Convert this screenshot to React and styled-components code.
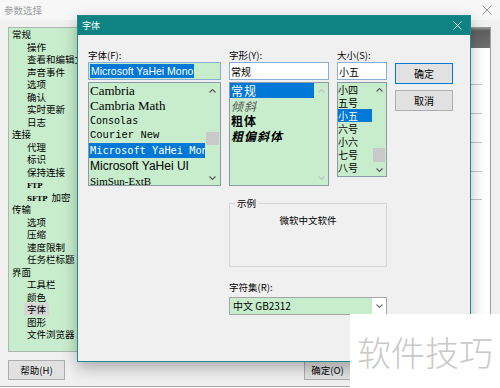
import React from "react";
import styled, { createGlobalStyle } from "styled-components";

const GREEN = "#c7edcc";
const BLUE = "#0078d7";

const GlobalStyle = createGlobalStyle`
  html, body {
    margin: 0;
    padding: 0;
    width: 500px;
    height: 388px;
    overflow: hidden;
    background: #fff;
    font-family: "Noto Sans CJK SC", "Noto Sans", sans-serif;
    font-size: 9.5px;
    color: #000;
  }
`;

const Page = styled.div`
  position: relative;
  width: 500px;
  height: 388px;
  overflow: hidden;
`;

/* ---------- background window: 参数选择 ---------- */

const MainWindow = styled.div`
  display: flex;
  flex-direction: column;
  height: 387px;
  box-sizing: border-box;
  background: #f0f0f0;
  border-bottom: 1px solid #a9a9a9;
`;

const MainTitle = styled.div`
  height: 20px;
  display: flex;
  align-items: center;
  justify-content: space-between;
  padding: 0 8px 0 4px;
  background: #f7f7f7;
  color: #9c9c9c;
  font-size: 9.5px;
`;

const MainBody = styled.div`
  display: flex;
  gap: 14px;
  height: 332px;
  box-sizing: border-box;
  padding: 7px 9px 0 8px;
`;

const Tree = styled.div`
  width: 190px;
  box-sizing: border-box;
  background: ${GREEN};
  border: 1px solid #a9b8ad;
  overflow: hidden;
`;

const TreeItem = styled.div`
  height: 12.5px;
  line-height: 12.5px;
  padding-left: ${(p) => (p.$child ? 18 : 3)}px;
  white-space: nowrap;
`;

const TreeLabel = styled.span`
  display: inline-block;
  line-height: 13px;
  padding: 0 3px;
  margin-left: -3px;
  background: ${(p) => (p.$selected ? "#d6d6d6" : "transparent")};
`;

const Tiny = styled.span`
  font-family: "DejaVu Serif", serif;
  font-weight: bold;
  font-size: 7px;
  margin-right: 4px;
`;

const RightPanel = styled.div`
  flex: 1;
  display: flex;
  flex-direction: column;
  background: #fff;
  border-right: 1px solid #a0a0a0;
`;

const PanelHeader = styled.div`
  height: 21px;
  background: linear-gradient(#a4a4a4, #5f5f5f 18%, #707070);
`;

const PanelRow = styled.div`
  height: ${(p) => p.$h}px;
  box-sizing: border-box;
  margin-right: 8px;
  border-bottom: 1px solid #c4c4c4;
`;

const MainFooter = styled.div`
  display: flex;
  align-items: flex-start;
  padding: 8px 8px 0;
  flex: 1;
`;

const WinButton = styled.button`
  height: 20px;
  width: ${(p) => p.$w}px;
  margin-left: ${(p) => p.$ml || 0}px;
  padding: 0;
  background: #e1e1e1;
  border: 1px solid #adadad;
  font-family: inherit;
  font-size: 9.5px;
  color: #000;
`;

/* ---------- font dialog: 字体 ---------- */

const Dialog = styled.div`
  position: absolute;
  left: 77px;
  top: 15px;
  width: 394px;
  height: 347px;
  box-sizing: border-box;
  background: #f0f0f0;
  border: 1px solid #1b8b8b;
  box-shadow: 0 6px 14px rgba(0, 0, 0, 0.28);
`;

const DialogTitle = styled.div`
  height: 19px;
  display: flex;
  align-items: center;
  justify-content: space-between;
  padding: 0 8px 0 4px;
  background: #0f8383;
  color: #fff;
  font-size: 9px;
`;

const DialogBody = styled.div`
  display: grid;
  grid-template-columns: 133px 100px 50px 58px;
  column-gap: 8px;
  row-gap: 11px;
  align-items: start;
  padding: 13px 0 0 10px;
`;

const Field = styled.div`
  display: flex;
  flex-direction: column;
`;

const Label = styled.div`
  height: 14px;
  line-height: 14px;
  font-size: 9.5px;
`;

const TextBox = styled.div`
  height: 18px;
  box-sizing: border-box;
  border: 1px solid #86aed6;
  background: ${(p) => p.$bg || "#fff"};
  padding: 0 1px;
  display: flex;
  align-items: center;
  font-size: 10px;
  white-space: nowrap;
  overflow: hidden;
`;

const Selected = styled.span`
  background: ${BLUE};
  color: #fff;
  font-family: "Liberation Sans", Arial, sans-serif;
  font-size: 10.5px;
  line-height: 14px;
  padding: 0 1px;
`;

const ListBox = styled.div`
  display: flex;
  height: ${(p) => p.$h}px;
  margin-top: 2px;
  box-sizing: border-box;
  border: 1px solid #8c9aa8;
  background: ${GREEN};
  overflow: hidden;
`;

const Items = styled.div`
  flex: 1;
  min-width: 0;
  overflow: hidden;
`;

const Row = styled.div`
  height: ${(p) => p.$h}px;
  line-height: ${(p) => p.$h}px;
  padding-left: ${(p) => p.$pl ?? 1}px;
  white-space: nowrap;
  overflow: hidden;
  font-family: ${(p) => p.$font || "inherit"};
  font-size: ${(p) => p.$size}px;
  font-weight: ${(p) => (p.$bold ? 700 : 400)};
  font-style: ${(p) => (p.$italic ? "italic" : "normal")};
  letter-spacing: ${(p) => p.$ls || 0}px;
  background: ${(p) => (p.$sel ? BLUE : "transparent")};
  color: ${(p) => (p.$sel ? "#fff" : p.$color || "#000")};
`;

const Scroll = styled.div`
  width: ${(p) => p.$w}px;
  display: flex;
  flex-direction: column;
`;

const ScrollArrow = styled.div`
  height: ${(p) => p.$h}px;
  display: flex;
  align-items: center;
  justify-content: center;
`;

const ScrollTrack = styled.div`
  flex: 1;
  padding: 0 1px;
`;

const Thumb = styled.div`
  height: ${(p) => p.$h}px;
  background: #c9c9c9;
`;

const ButtonCol = styled.div`
  display: flex;
  flex-direction: column;
  gap: 6px;
  padding-top: 15px;
`;

const DialogButton = styled.button`
  height: 21px;
  width: 58px;
  padding: 0;
  background: #e1e1e1;
  border: 1px solid ${(p) => (p.$primary ? BLUE : "#adadad")};
  font-family: inherit;
  font-size: 10px;
  color: #000;
`;

const Lower = styled.div`
  grid-column: 2 / 4;
  display: flex;
  flex-direction: column;
`;

const GroupBox = styled.fieldset`
  margin: 0;
  padding: 4px 0 0;
  height: 70px;
  box-sizing: border-box;
  border: 1px solid #d6d6d6;
  display: flex;
  align-items: center;
  justify-content: center;
  font-size: 9.5px;
`;

const Legend = styled.legend`
  margin-left: 5px;
  padding: 0 2px;
  font-size: 9.5px;
  line-height: 12px;
`;

const CharsetLabel = styled(Label)`
  margin-top: 13px;
`;

const Select = styled.div`
  display: flex;
  height: 18px;
  margin-top: 3px;
  box-sizing: border-box;
  border: 1px solid #a6a6a6;
`;

const SelectValue = styled.div`
  flex: 1;
  background: ${GREEN};
  padding-left: 3px;
  line-height: 16px;
  font-size: 10px;
`;

const SelectArrow = styled.div`
  width: 14px;
  background: #fff;
  display: flex;
  align-items: center;
  justify-content: center;
`;

const Watermark = styled.div`
  position: absolute;
  right: 0;
  bottom: 0;
  width: 150px;
  height: 74px;
  background: #fff;
  display: flex;
  align-items: center;
  justify-content: center;
  color: #c9c9c9;
  font-size: 34px;
  font-weight: 300;
  letter-spacing: 0;
`;

function Chevron({ up, color = "#5a5a5a" }) {
  return (
    <svg width="7" height="4" viewBox="0 0 7 4">
      <polyline
        points={up ? "0.5,3.5 3.5,0.5 6.5,3.5" : "0.5,0.5 3.5,3.5 6.5,0.5"}
        fill="none"
        stroke={color}
        strokeWidth="1.1"
      />
    </svg>
  );
}

function CloseIcon({ color, size = 9 }) {
  return (
    <svg width={size} height={size} viewBox="0 0 10 10">
      <path d="M0.5 0.5 L9.5 9.5 M9.5 0.5 L0.5 9.5" stroke={color} strokeWidth="1" />
    </svg>
  );
}

function ScrollBar({ w, arrowH, thumbTop, thumbH, disabled }) {
  const color = disabled ? "#c2c2c2" : "#5a5a5a";
  return (
    <Scroll $w={w}>
      <ScrollArrow $h={arrowH}>
        <Chevron up color={color} />
      </ScrollArrow>
      <ScrollTrack>
        {!disabled && <Thumb $h={thumbH} style={{ marginTop: thumbTop }} />}
      </ScrollTrack>
      <ScrollArrow $h={arrowH}>
        <Chevron color={color} />
      </ScrollArrow>
    </Scroll>
  );
}

const tree = [
  ["常规"],
  ["操作", 1],
  ["查看和编辑文件", 1],
  ["声音事件", 1],
  ["选项", 1],
  ["确认", 1],
  ["实时更新", 1],
  ["日志", 1],
  ["连接"],
  ["代理", 1],
  ["标识", 1],
  ["保持连接", 1],
  ["FTP", 1, "tiny"],
  ["SFTP", 1, "tiny", "加密"],
  ["传输"],
  ["选项", 1],
  ["压缩", 1],
  ["速度限制", 1],
  ["任务栏标题", 1],
  ["界面"],
  ["工具栏", 1],
  ["颜色", 1],
  ["字体", 1, "sel"],
  ["图形", 1],
  ["文件浏览器", 1],
];

const fonts = [
  { name: "Cambria", font: '"Liberation Serif", serif', size: 13, h: 15 },
  { name: "Cambria Math", font: '"Liberation Serif", serif', size: 13, h: 15 },
  { name: "Consolas", font: '"DejaVu Sans Mono", monospace', size: 10, h: 15 },
  { name: "Courier New", font: '"Liberation Mono", monospace', size: 10.5, h: 15 },
  { name: "Microsoft YaHei Mono", font: '"DejaVu Sans Mono", monospace', size: 10.3, h: 15, sel: true },
  { name: "Microsoft YaHei UI", font: '"Liberation Sans", sans-serif', size: 12, h: 17 },
  { name: "SimSun-ExtB", font: '"Liberation Serif", serif', size: 11, h: 12 },
];

const styles = [
  { name: "常规", sel: true },
  { name: "倾斜", italic: true, color: "#555" },
  { name: "粗体", bold: true },
  { name: "粗偏斜体", bold: true, italic: true },
];

const sizes = ["小四", "五号", "小五", "六号", "小六", "七号", "八号"];

export default function App() {
  return (
    <Page>
      <GlobalStyle />
      <MainWindow>
        <MainTitle>
          参数选择
          <CloseIcon color="#9a9a9a" size={10} />
        </MainTitle>
        <MainBody>
          <Tree>
            {tree.map(([label, child, kind, extra], i) => (
              <TreeItem key={i} $child={child}>
                {kind === "tiny" ? (
                  <>
                    <Tiny>{label}</Tiny>
                    {extra}
                  </>
                ) : (
                  <TreeLabel $selected={kind === "sel"}>{label}</TreeLabel>
                )}
              </TreeItem>
            ))}
          </Tree>
          <RightPanel>
            <PanelHeader />
            <PanelRow $h={37} />
            <PanelRow $h={29} />
            <PanelRow $h={29} />
            <PanelRow $h={29} />
            <PanelRow $h={28} />
          </RightPanel>
        </MainBody>
        <MainFooter>
          <WinButton $w={57}>帮助(H)</WinButton>
          <WinButton $w={47} $ml={239}>确定(O)</WinButton>
        </MainFooter>
      </MainWindow>

      <Dialog>
        <DialogTitle>
          字体
          <CloseIcon color="#fff" size={9} />
        </DialogTitle>
        <DialogBody>
          <Field>
            <Label>字体(F):</Label>
            <TextBox $bg={GREEN}>
              <Selected>Microsoft YaHei Mono</Selected>
            </TextBox>
            <ListBox $h={104}>
              <Items>
                {fonts.map((f) => (
                  <Row key={f.name} $h={f.h} $font={f.font} $size={f.size} $sel={f.sel}>
                    {f.name}
                  </Row>
                ))}
              </Items>
              <ScrollBar w={15} arrowH={15} thumbTop={34} thumbH={13} />
            </ListBox>
          </Field>

          <Field>
            <Label>字形(Y):</Label>
            <TextBox>常规</TextBox>
            <ListBox $h={104}>
              <Items>
                {styles.map((s) => (
                  <Row
                    key={s.name}
                    $h={15}
                    $size={12}
                    $ls={1}
                    $sel={s.sel}
                    $bold={s.bold}
                    $italic={s.italic}
                    $color={s.color}
                  >
                    {s.name}
                  </Row>
                ))}
              </Items>
              <ScrollBar w={14} arrowH={15} disabled />
            </ListBox>
          </Field>

          <Field>
            <Label>大小(S):</Label>
            <TextBox>小五</TextBox>
            <ListBox $h={95}>
              <Items>
                {sizes.map((s) => (
                  <Row key={s} $h={13} $size={10} $pl={0} $sel={s === "小五"}>
                    {s}
                  </Row>
                ))}
              </Items>
              <ScrollBar w={14} arrowH={13} thumbTop={52} thumbH={14} />
            </ListBox>
          </Field>

          <ButtonCol>
            <DialogButton $primary>确定</DialogButton>
            <DialogButton>取消</DialogButton>
          </ButtonCol>

          <Lower>
            <GroupBox>
              <Legend>示例</Legend>
              微软中文软件
            </GroupBox>
            <CharsetLabel>字符集(R):</CharsetLabel>
            <Select>
              <SelectValue>中文 GB2312</SelectValue>
              <SelectArrow>
                <Chevron color="#777" />
              </SelectArrow>
            </Select>
          </Lower>
        </DialogBody>
      </Dialog>

      <Watermark>软件技巧</Watermark>
    </Page>
  );
}
